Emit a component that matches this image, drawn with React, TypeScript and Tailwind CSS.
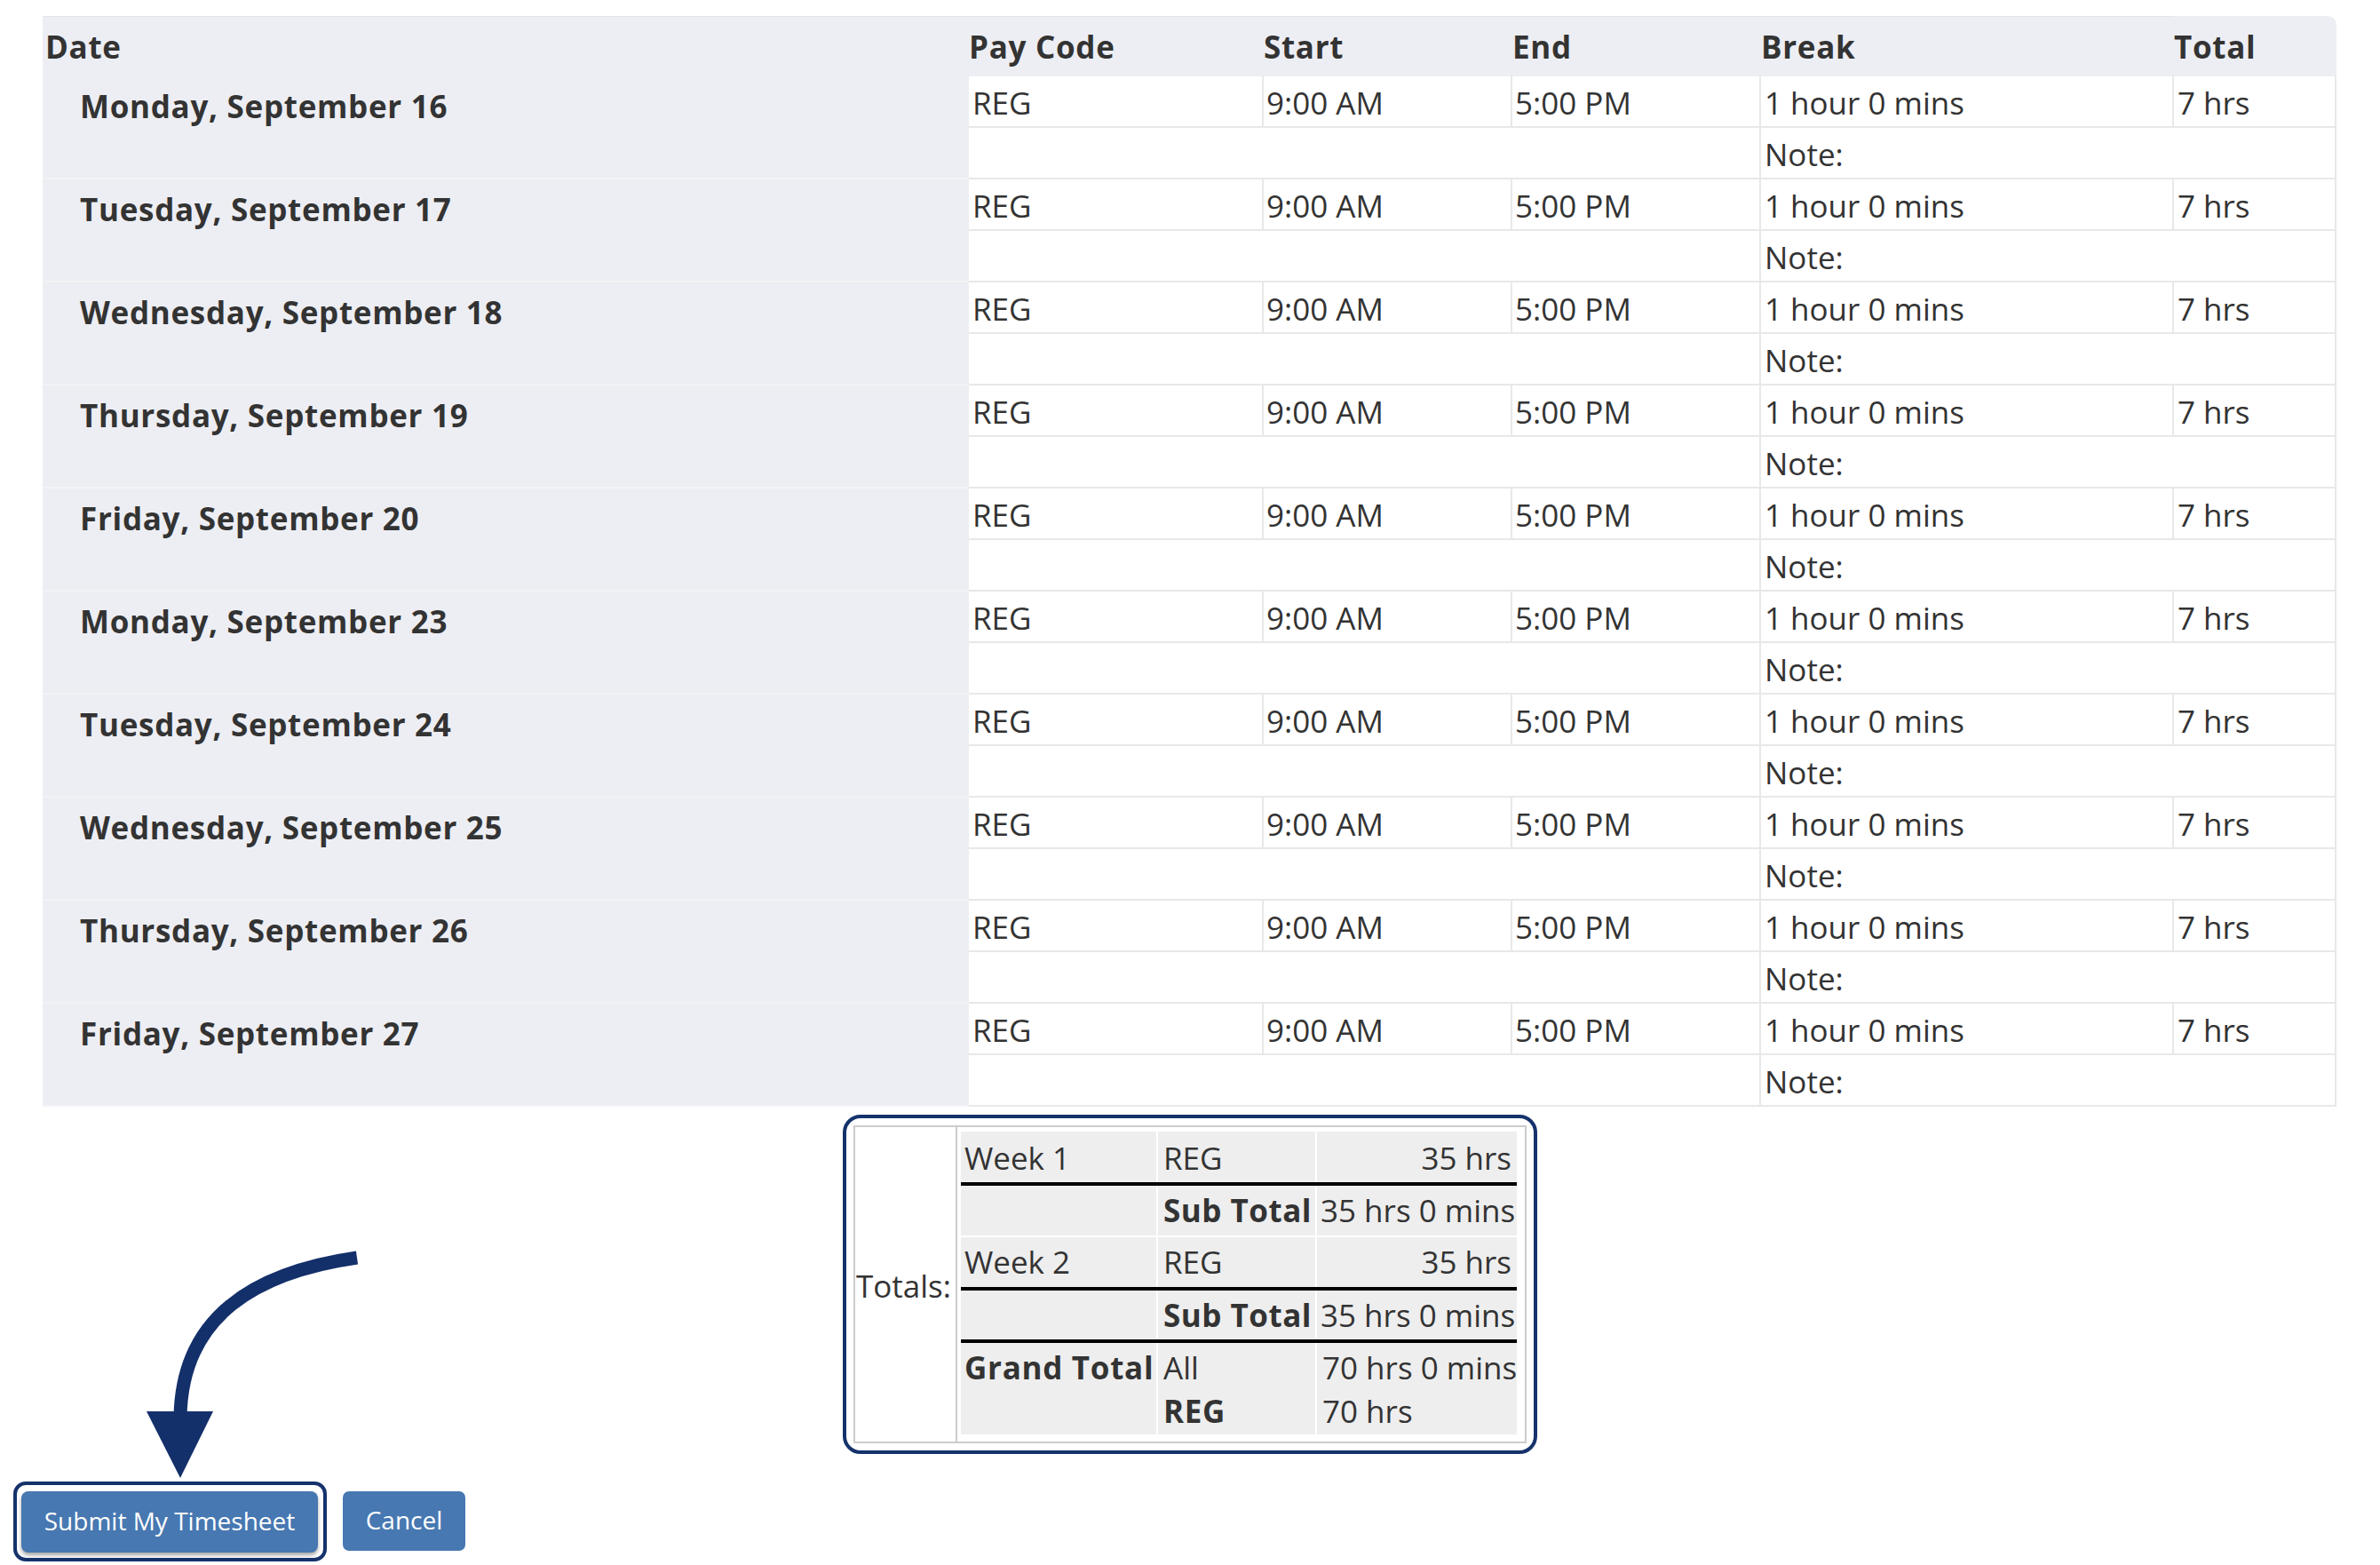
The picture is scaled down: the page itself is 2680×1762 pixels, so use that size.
import React from "react";

const days = [
  "Monday, September 16",
  "Tuesday, September 17",
  "Wednesday, September 18",
  "Thursday, September 19",
  "Friday, September 20",
  "Monday, September 23",
  "Tuesday, September 24",
  "Wednesday, September 25",
  "Thursday, September 26",
  "Friday, September 27",
];

function Arrow() {
  return (
    <svg
      className="absolute left-[150px] top-[1400px]"
      width={270}
      height={270}
      viewBox="150 1400 270 270"
    >
      <path
        d="M 402 1416 C 290 1432, 205 1480, 203 1595"
        fill="none"
        stroke="#14306a"
        strokeWidth={15}
      />
      <polygon points="165,1589 240,1589 203,1664" fill="#14306a" />
    </svg>
  );
}

const th = "bg-[#edeef3] text-left font-bold tracking-[0.7px] pt-[10px] pb-[9px] leading-[48px]";
const td = "pt-[3px] border-r-2 border-b-2 border-[#e8e8e8] leading-[48px] whitespace-nowrap";

export default function App() {
  return (
    <div className="relative w-[2680px] h-[1762px] bg-white font-['Open_Sans',_sans-serif] text-[#333333] text-[35px] overflow-hidden">
      <table className="ml-[48px] mt-[18px] w-[2583px] table-fixed border-separate border-spacing-0">
        <colgroup>
          <col className="w-[1043px]" />
          <col className="w-[332px]" />
          <col className="w-[280px]" />
          <col className="w-[280px]" />
          <col className="w-[465px]" />
          <col className="w-[183px]" />
        </colgroup>
        <thead>
          <tr>
            <th className={`${th} pl-[3px] border-t border-[#e4e5ea]`}>Date</th>
            <th className={`${th} pl-[0px] border-t border-[#e4e5ea]`}>Pay Code</th>
            <th className={`${th} pl-[0px] border-t border-[#e4e5ea]`}>Start</th>
            <th className={`${th} pl-[0px] border-t border-[#e4e5ea]`}>End</th>
            <th className={`${th} pl-[0px] border-t border-[#e4e5ea]`}>Break</th>
            <th className={`${th} pl-[0px] rounded-tr-[10px]`}>Total</th>
          </tr>
        </thead>
        <tbody>
          {days.map((d) => (
            <React.Fragment key={d}>
              <tr className="h-[58px]">
                <td
                  rowSpan={2}
                  className="bg-[#edeef3] align-top pt-[10px] pl-[42px] font-bold tracking-[0.7px] leading-[48px] border-b-2 border-[#f2f3f6] whitespace-nowrap"
                >
                  {d}
                </td>
                <td className={`${td} pl-[4px]`}>REG</td>
                <td className={`${td} pl-[3px]`}>9:00 AM</td>
                <td className={`${td} pl-[3px]`}>5:00 PM</td>
                <td className={`${td} pl-[4px]`}>1 hour 0 mins</td>
                <td className={`${td} pl-[4px]`}>7 hrs</td>
              </tr>
              <tr className="h-[58px]">
                <td colSpan={3} className="border-r-2 border-b-2 border-[#e8e8e8]"></td>
                <td colSpan={2} className={`${td} pl-[4px]`}>Note:</td>
              </tr>
            </React.Fragment>
          ))}
        </tbody>
      </table>

      <div className="flex justify-center mt-[9px]">
        <div className="w-[782px] h-[382px] border-4 border-[#15326b] rounded-[20px] p-[8px]">
          <div className="flex h-full border-2 border-[#cccccc]">
            <div className="w-[115px] border-r-2 border-[#cccccc] flex items-center pl-[1px] pt-[4px]">Totals:</div>
            <div className="flex flex-col pl-[4px] pt-[5px]">
              <div className="grid grid-cols-[220px_177px_225px] gap-x-[2px] h-[57px] leading-[48px]">
                <div className="bg-[#eeeeee] pl-[4px] flex items-center pt-[2px]">Week 1</div>
                <div className="bg-[#eeeeee] pl-[6px] flex items-center pt-[2px]">REG</div>
                <div className="bg-[#eeeeee] pr-[6px] flex items-center justify-end pt-[2px]">35 hrs</div>
              </div>
              <div className="h-[4px] bg-black" />
              <div className="grid grid-cols-[220px_177px_225px] gap-x-[2px] h-[56px] leading-[48px]">
                <div className="bg-[#eeeeee]"></div>
                <div className="bg-[#eeeeee] pl-[6px] flex items-center font-bold tracking-[0.5px] whitespace-nowrap">Sub Total</div>
                <div className="bg-[#eeeeee] pl-[4px] flex items-center whitespace-nowrap">35 hrs 0 mins</div>
              </div>
              <div className="h-[2px]" />
              <div className="grid grid-cols-[220px_177px_225px] gap-x-[2px] h-[56px] leading-[48px]">
                <div className="bg-[#eeeeee] pl-[4px] flex items-center">Week 2</div>
                <div className="bg-[#eeeeee] pl-[6px] flex items-center">REG</div>
                <div className="bg-[#eeeeee] pr-[6px] flex items-center justify-end">35 hrs</div>
              </div>
              <div className="h-[4px] bg-black" />
              <div className="grid grid-cols-[220px_177px_225px] gap-x-[2px] h-[55px] leading-[48px]">
                <div className="bg-[#eeeeee]"></div>
                <div className="bg-[#eeeeee] pl-[6px] flex items-center font-bold tracking-[0.5px] whitespace-nowrap">Sub Total</div>
                <div className="bg-[#eeeeee] pl-[4px] flex items-center whitespace-nowrap">35 hrs 0 mins</div>
              </div>
              <div className="h-[4px] bg-black" />
              <div className="grid grid-cols-[220px_177px_225px] gap-x-[2px] h-[103px] leading-[49px]">
                <div className="bg-[#eeeeee] pl-[4px] pt-[3px] font-bold tracking-[0.7px] whitespace-nowrap">Grand Total</div>
                <div className="bg-[#eeeeee] pl-[6px] pt-[3px] flex flex-col">
                  <span>All</span>
                  <span className="font-bold tracking-[0.7px]">REG</span>
                </div>
                <div className="bg-[#eeeeee] pl-[6px] pt-[3px] flex flex-col whitespace-nowrap">
                  <span>70 hrs 0 mins</span>
                  <span>70 hrs</span>
                </div>
              </div>
            </div>
          </div>
        </div>
      </div>

      <div className="flex items-start mt-[31px] ml-[15px]">
        <div className="border-4 border-[#15326b] rounded-[14px] pl-[5px] pr-[6px] pt-[7px] pb-[6px]">
          <button className="w-[334px] h-[69px] bg-[#4778b1] rounded-[8px] text-white text-[28px] font-['Open_Sans',_sans-serif] shadow-[0_3px_4px_rgba(0,0,0,0.35)] flex items-center justify-center pb-[4px]">
            Submit My Timesheet
          </button>
        </div>
        <button className="ml-[18px] mt-[11px] w-[138px] h-[67px] bg-[#4778b1] rounded-[7px] text-white text-[28px] font-['Open_Sans',_sans-serif] flex items-center justify-center pb-[4px]">
          Cancel
        </button>
      </div>

      <Arrow />
    </div>
  );
}
